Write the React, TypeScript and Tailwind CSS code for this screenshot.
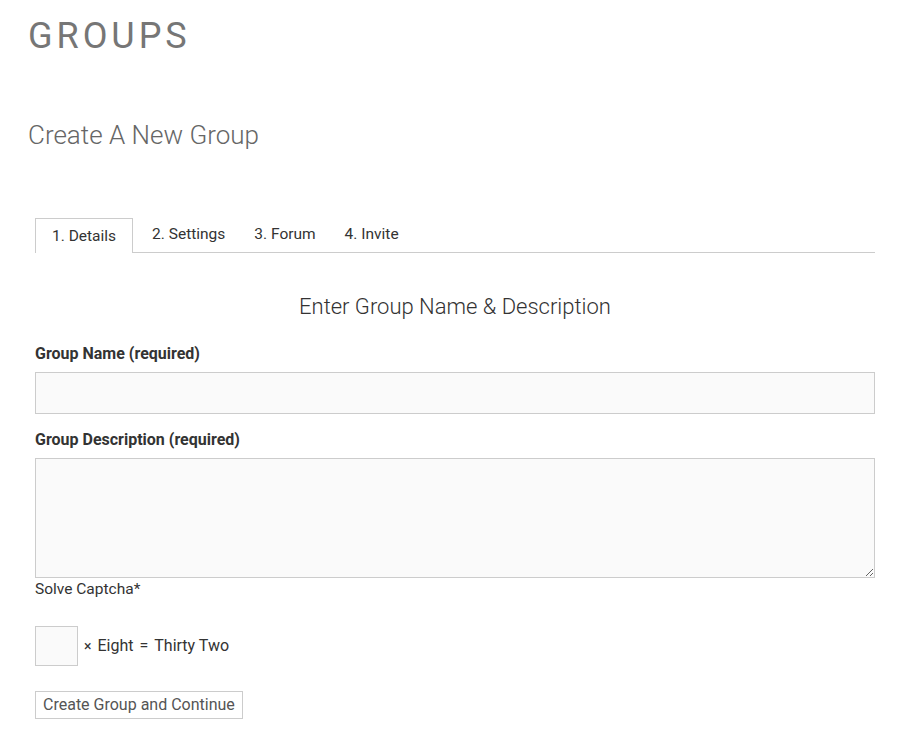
import React from "react";

export default function App() {
  const font = { fontFamily: "Roboto, 'Open Sans', sans-serif" };
  return (
    <div className="w-[900px] h-[736px] bg-white overflow-hidden" style={font}>
      <div className="pl-[28px] pt-[14px]">
        <h1 className="text-[36px] leading-[44px] tracking-[0.11em] text-[#767676] font-normal">GROUPS</h1>
        <h2 className="mt-[61px] text-[26px] leading-[32px] text-[#666] font-light">Create A New Group</h2>
      </div>
      <div className="pl-[35px] pr-[25px] mt-[67px]">
        <div className="flex items-end border-b border-[#ccc] h-[35px]">
          <div className="h-[35px] px-[16px] border border-b-0 border-[#ccc] bg-white -mb-px flex items-center text-[15.5px] text-[#333] pt-[2px]">1. Details</div>
          <div className="h-[35px] ml-[19px] flex items-center text-[15.5px] text-[#333] pt-[1px]">2. Settings</div>
          <div className="h-[35px] ml-[29px] flex items-center text-[15.5px] text-[#333] pt-[1px]">3. Forum</div>
          <div className="h-[35px] ml-[29px] flex items-center text-[15.5px] text-[#333] pt-[1px]">4. Invite</div>
        </div>
        <div className="mt-[40px] text-center text-[22px] leading-[28px] font-light text-[#333]">Enter Group Name &amp; Description</div>
        <div className="mt-[23px] text-[16px] leading-[20px] font-bold text-[#333]">Group Name (required)</div>
        <input className="mt-[8px] block w-full h-[42px] bg-[#fafafa] border border-[#ccc] outline-none" />
        <div className="mt-[16px] text-[16px] leading-[20px] font-bold text-[#333]">Group Description (required)</div>
        <textarea className="mt-[8px] block w-full h-[120px] bg-[#fafafa] border border-[#ccc] outline-none resize-y" />
        <div className="mt-0 text-[15.5px] leading-[22px] text-[#333]">Solve Captcha*</div>
        <div className="mt-[26px] flex items-center text-[16px] text-[#333]">
          <input className="block w-[43px] h-[40px] bg-[#fafafa] border border-[#ccc] outline-none" />
          <span className="ml-[6px] text-[14px]">×</span>
          <span className="ml-[6px]">Eight</span>
          <span className="ml-[6px]">=</span>
          <span className="ml-[6px]">Thirty Two</span>
        </div>
        <button className="mt-[25px] block h-[28px] px-[7px] border border-[#ccc] bg-white text-[16px] text-[#555]">Create Group and Continue</button>
      </div>
    </div>
  );
}
